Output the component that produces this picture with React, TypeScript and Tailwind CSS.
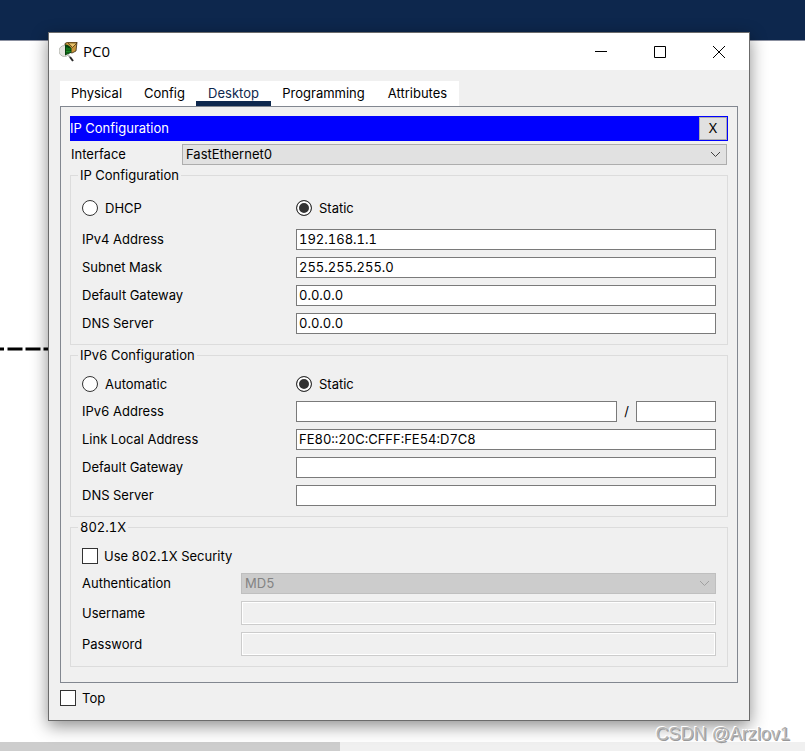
import React from "react";

function Chevron({ dim = false }: { dim?: boolean }) {
  return (
    <svg
      className={`pointer-events-none absolute right-1.5 top-[7px] ${dim ? "text-[#a0a0a0]" : "text-[#404040]"}`}
      width="11"
      height="7"
      viewBox="0 0 11 7"
      fill="none"
      stroke="currentColor"
      aria-hidden="true"
    >
      <path d="M1 1l4.5 4.5L10 1" />
    </svg>
  );
}

function PacketIcon() {
  return (
    <svg width="20" height="20" viewBox="0 0 20 20" aria-hidden="true">
      <path d="M6 1.500l3-1.500h9l-1 9-4 2-7-2z" fill="#c8953c" stroke="#3a2a10" strokeWidth="0.8" />
      <path d="M9 .8l9 .2-4.500 4.500z" fill="#e9c36a" stroke="#4a3412" strokeWidth="0.8" />
      <circle cx="5.500" cy="9" r="5.500" fill="#e4e4e0" stroke="#b8bab4" />
      <path d="M6 2.500q4 0 6.500 4v4l-6.500 3z" fill="#06400c" />
      <path d="M8 5v7M10 6v5M7 7h5M7 9.500h5" stroke="#1c9a28" strokeWidth="0.7" />
      <path d="M9.500 13.500l1.500 1.500" stroke="#999" strokeWidth="1.500" />
      <path d="M11 15l3 4" stroke="#2a2a2a" strokeWidth="2" />
    </svg>
  );
}

function TitleBar() {
  const button = "flex h-full w-[59px] items-center justify-center";
  return (
    <header className="flex h-[37px] items-center bg-white pl-2.5 pr-px">
      <PacketIcon />
      <h1 className="ml-1 flex-1 pb-0.5 font-['Open_Sans',sans-serif] text-[15px] leading-5">PC0</h1>
      <button className={button} aria-label="Minimize">
        <svg width="12" height="12" stroke="#000" fill="none">
          <path d="M0 5.500h12" />
        </svg>
      </button>
      <button className={button} aria-label="Maximize">
        <svg width="12" height="12" stroke="#000" fill="none">
          <path d="M.5.5h11v11H.5z" />
        </svg>
      </button>
      <button className={button} aria-label="Close">
        <svg width="12" height="12" stroke="#000" fill="none">
          <path d="M0 0l12 12M12 0L0 12" />
        </svg>
      </button>
    </header>
  );
}

const tabs = ["Physical", "Config", "Desktop", "Programming", "Attributes"];

function Tabs() {
  return (
    <nav className="grid w-max grid-cols-[73px_63px_75px_105px_83px] bg-white">
      {tabs.map((tab) => (
        <button
          key={tab}
          className={`h-[25px] border-b-[5px] pt-1 leading-4 ${
            tab === "Desktop" ? "border-[#0d274d] text-[#0d274d]" : "border-transparent"
          }`}
        >
          {tab}
        </button>
      ))}
    </nav>
  );
}

const fieldClass = "h-[21px] w-full min-w-0 border border-[#7a7a7a] bg-white px-0.5 pb-px outline-none";
const labelClass = "self-start leading-5";

function Field({ id, label, value = "" }: { id: string; label: string; value?: string }) {
  return (
    <div className="grid grid-cols-[214px_1fr] items-center">
      <label htmlFor={id} className={labelClass}>
        {label}
      </label>
      <input id={id} type="text" defaultValue={value} className={fieldClass} />
    </div>
  );
}

function Radio({ name, label, checked = false }: { name: string; label: string; checked?: boolean }) {
  return (
    <label className="flex items-center gap-[7px]">
      <input
        type="radio"
        name={name}
        defaultChecked={checked}
        className="size-4 appearance-none rounded-full border border-[#333] bg-white checked:bg-[#333] checked:shadow-[inset_0_0_0_2px_#fff]"
      />
      {label}
    </label>
  );
}

function Check({ label }: { label: string }) {
  return (
    <label className="flex items-center gap-1.5">
      <input type="checkbox" className="size-4 appearance-none border border-[#333] bg-white checked:bg-[#333]" />
      {label}
    </label>
  );
}

function Group({ title, children }: { title: string; children: React.ReactNode }) {
  return (
    <fieldset className="min-w-0 border border-[#dcdcdc]">
      <legend className="ml-[7px] px-0.5 leading-5">{title}</legend>
      <div className="px-[11px] pb-2.5">{children}</div>
    </fieldset>
  );
}

function Ipv4Group() {
  return (
    <Group title="IP Configuration">
      <div className="mb-2.5 grid h-[34px] grid-cols-[214px_1fr] items-center pt-3">
        <Radio name="ipv4-mode" label="DHCP" />
        <Radio name="ipv4-mode" label="Static" checked />
      </div>
      <div className="flex flex-col gap-[7px]">
        <Field id="ipv4-address" label="IPv4 Address" value="192.168.1.1" />
        <Field id="ipv4-mask" label="Subnet Mask" value="255.255.255.0" />
        <Field id="ipv4-gateway" label="Default Gateway" value="0.0.0.0" />
        <Field id="ipv4-dns" label="DNS Server" value="0.0.0.0" />
      </div>
    </Group>
  );
}

function Ipv6Group() {
  return (
    <Group title="IPv6 Configuration">
      <div className="mb-1.5 grid h-[30px] grid-cols-[214px_1fr] items-center pt-2">
        <Radio name="ipv6-mode" label="Automatic" />
        <Radio name="ipv6-mode" label="Static" checked />
      </div>
      <div className="flex flex-col gap-[7px]">
        <div className="grid grid-cols-[214px_1fr_19px_80px] items-center">
          <label htmlFor="ipv6-address" className={labelClass}>
            IPv6 Address
          </label>
          <input id="ipv6-address" type="text" className={fieldClass} />
          <span className="self-start text-center leading-5">/</span>
          <input type="text" aria-label="Prefix length" className={fieldClass} />
        </div>
        <Field id="ipv6-link" label="Link Local Address" value="FE80::20C:CFFF:FE54:D7C8" />
        <Field id="ipv6-gateway" label="Default Gateway" />
        <Field id="ipv6-dns" label="DNS Server" />
      </div>
    </Group>
  );
}

function SecurityGroup() {
  const row = "grid grid-cols-[159px_1fr] items-center";
  const locked = "h-6 w-full min-w-0 border border-[#ccc] bg-[#f0f0f0] px-1 shadow-[inset_0_0_0_1px_#fff]";
  return (
    <Group title="802.1X">
      <div className="mb-1.5 flex h-[30px] items-center pt-2">
        <Check label="Use 802.1X Security" />
      </div>
      <div className="flex flex-col gap-[7px]">
        <div className={row}>
          <label htmlFor="auth" className={labelClass}>
            Authentication
          </label>
          <div className="relative">
            <select
              id="auth"
              disabled
              className="block h-[21px] w-full appearance-none border border-[#bfbfbf] bg-[#ccc] px-[3px] pb-px text-[#838383] opacity-100"
            >
              <option>MD5</option>
            </select>
            <Chevron dim />
          </div>
        </div>
        <div className={row}>
          <label htmlFor="username">Username</label>
          <input id="username" type="text" disabled className={locked} />
        </div>
        <div className={row}>
          <label htmlFor="password">Password</label>
          <input id="password" type="password" disabled className={locked} />
        </div>
      </div>
    </Group>
  );
}

function DesktopPanel() {
  return (
    <section className="border border-[#828790] px-[9px] pb-[15px] pt-[9px]">
      <div className="flex h-[25px] items-start bg-[#0000ff] py-px pr-px text-white">
        <h2 className="flex-1 leading-[22px]">IP Configuration</h2>
        <button className="h-[23px] w-7 border border-[#adadad] bg-[#e1e1e1] pb-px text-black">X</button>
      </div>
      <div className="mr-px mt-[3px] grid grid-cols-[112px_1fr] items-center">
        <label htmlFor="interface" className="self-start pl-px leading-5">
          Interface
        </label>
        <div className="relative">
          <select
            id="interface"
            className="block h-[21px] w-full appearance-none border border-[#adadad] bg-[#e1e1e1] px-[3px] pb-px outline-none"
          >
            <option>FastEthernet0</option>
          </select>
          <Chevron />
        </div>
      </div>
      <Ipv4Group />
      <Ipv6Group />
      <SecurityGroup />
    </section>
  );
}

export default function App() {
  return (
    <div className="relative flex min-h-screen flex-col overflow-hidden bg-white font-[Inter,sans-serif] text-[13px] leading-4 text-black tabular-nums">
      <div className="h-[41px] border-b border-[#8b90a0] bg-[#0d274d]" />
      <div className="flex-1" />
      <div className="h-[9px] bg-[#f0f0f0]">
        <div className="h-full w-[340px] bg-[#cdcdcd]" />
      </div>

      <svg className="absolute left-0 top-[347px]" width="60" height="4" aria-hidden="true">
        <path d="M0 2h4M7.500 2h15M25.500 2h15M43.500 2h16" stroke="#000" strokeWidth="3" />
      </svg>

      <main className="absolute left-12 right-[55px] top-8 border border-[#6b6b6b] bg-[#f0f0f0] shadow-[0_5px_16px_rgba(0,0,0,0.45)]">
        <TitleBar />
        <div className="px-[11px] pb-3.5 pt-[11px]">
          <Tabs />
          <DesktopPanel />
          <div className="mt-[7px] flex">
            <Check label="Top" />
          </div>
        </div>
      </main>

      <p className="absolute bottom-[7px] right-[15px] font-['Liberation_Sans',sans-serif] text-[18px] leading-5 text-[#b4b4b4] [text-shadow:-1px_-1px_0_#fff,1px_1px_0_#999]">
        CSDN @Arzlov1
      </p>
    </div>
  );
}
